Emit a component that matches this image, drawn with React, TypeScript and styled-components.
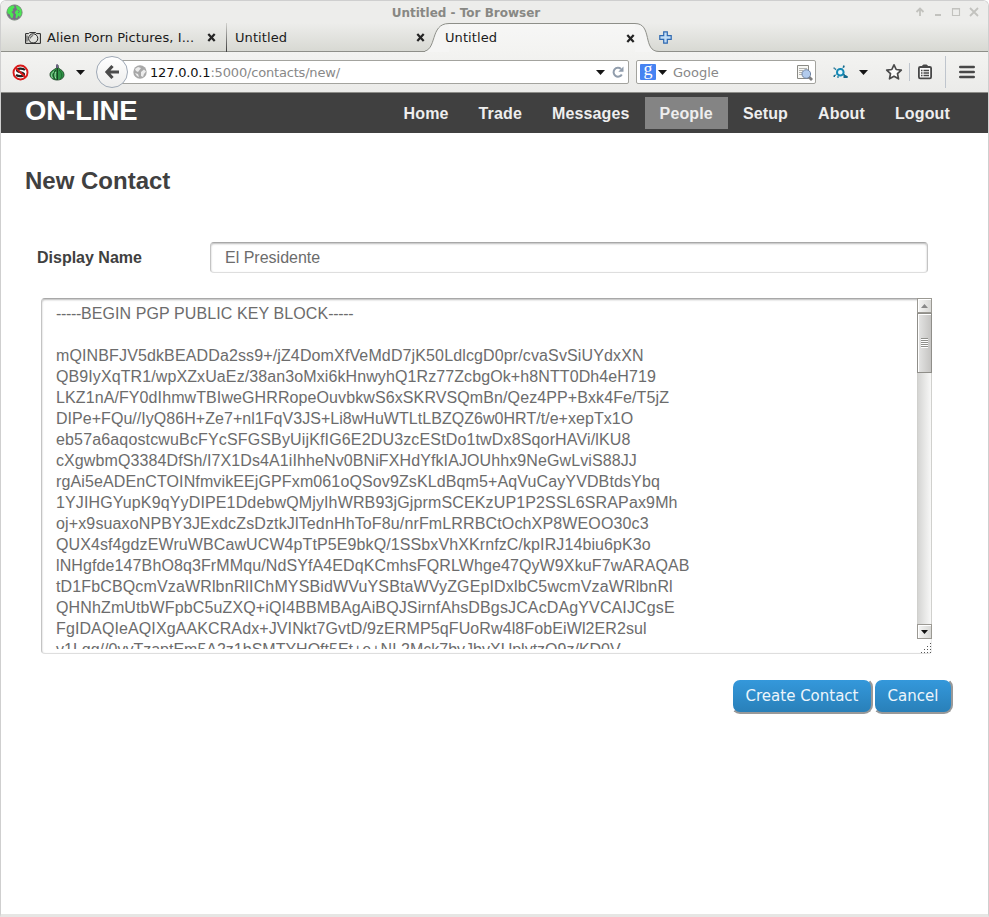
import React from 'react';
import styled, { createGlobalStyle } from 'styled-components';

const GlobalStyle = createGlobalStyle`
  * { box-sizing: border-box; }
  html, body { margin: 0; padding: 0; background: #fff; overflow: hidden; }
`;

const ui = `'DejaVu Sans', sans-serif`;
const helvetica = `'Liberation Sans', Arial, sans-serif`;

const Window = styled.div`
  width: 989px;
  height: 917px;
  display: flex;
  flex-direction: column;
  border: 1px solid #cfcfcf;
  border-bottom: 3px solid #e6e6e4;
  border-radius: 6px 6px 0 0;
  background: #fff;
  overflow: hidden;
  font-family: ${ui};
  white-space: nowrap;
`;

const Chrome = styled.header`
  flex: none;
  height: 51px;
  background: linear-gradient(#ededeb 0 22px, #d8d9d3 50px);
  border-bottom: 1px solid #8e8f89;
`;

const TitleBar = styled.div`
  display: grid;
  grid-template-columns: 26px 1fr 80px;
  height: 22px;
  padding: 0 8px 0 5px;
  align-items: center;
`;

const Title = styled.div`
  text-align: center;
  font-size: 12px;
  font-weight: bold;
  color: #888884;
  padding-top: 1px;
`;

const WindowButtons = styled.div`
  display: flex;
  justify-content: flex-end;
  gap: 6px;
`;

const TabStrip = styled.div`
  display: flex;
  height: 29px;
  align-items: stretch;
`;

const Tab = styled.div<{ $width: number; $divider?: boolean }>`
  display: flex;
  align-items: center;
  width: ${(p) => p.$width}px;
  font-size: 13px;
  letter-spacing: 0.08px;
  color: #1b1b1b;
  border-right: ${(p) => (p.$divider ? '1px solid #4d4d4a' : 'none')};
  border-image: ${(p) => (p.$divider ? 'linear-gradient(#d8d8d4, #444 90%) 1' : 'none')};
`;

const TabLabel = styled.span`
  flex: 1;
  padding-bottom: 1px;
`;

const ActiveTab = styled(Tab)`
  height: 29px;
  background: linear-gradient(#f7f7f6, #f3f3f1);
  border-top: 1px solid #8e8f89;
  margin-bottom: -1px;
`;

const ActiveLabel = styled(TabLabel)`
  margin-left: -4px;
  z-index: 1;
`;

const TabCurve = styled.svg`
  flex: none;
  width: 24px;
  height: 29px;
`;

const Toolbar = styled.div`
  flex: none;
  display: flex;
  align-items: center;
  height: 41px;
  background: linear-gradient(#f3f3f1, #ebebe9);
  border-bottom: 1px solid #8c8c88;
`;

const BackButton = styled.div`
  display: flex;
  align-items: center;
  justify-content: center;
  width: 32px;
  height: 32px;
  margin: 0 -10px 0 11px;
  border: 1px solid #9fa9b6;
  border-radius: 50%;
  background: linear-gradient(#fff, #ededec);
  z-index: 1;
`;

const Field = styled.div<{ $width: number; $inset: number }>`
  display: flex;
  align-items: center;
  width: ${(p) => p.$width}px;
  height: 24px;
  padding-left: ${(p) => p.$inset}px;
  border: 1px solid #a3a39e;
  border-radius: 2px;
  background: #fff;
`;

const Address = styled.span`
  flex: 1;
  padding-left: 3px;
  font-size: 13px;
  letter-spacing: -0.18px;
  color: #888;
`;

const Host = styled.span`
  color: #111;
`;

const SearchHint = styled(Address)`
  padding-left: 6px;
  letter-spacing: 0;
`;

const GoogleMark = styled.span`
  width: 16px;
  height: 16px;
  border-radius: 1px;
  background: #4683f2;
  color: #fff;
  font: 18px/11px 'Liberation Serif', serif;
  text-align: center;
  margin-right: 2px;
`;

const Spacer = styled.span<{ $width: number }>`
  flex: none;
  width: ${(p) => p.$width}px;
`;

const Rule = styled.span<{ $height: number }>`
  width: 1px;
  height: ${(p) => p.$height}px;
  background: #bfc5cd;
`;

const SiteBar = styled.nav`
  flex: none;
  display: flex;
  justify-content: space-between;
  height: 40px;
  padding: 4px 23px 4px 24px;
  background: #404040;
  font-family: ${helvetica};
  font-weight: bold;
`;

const Brand = styled.div`
  font-size: 27.4px;
  line-height: 28px;
  color: #fff;
`;

const NavList = styled.div`
  display: flex;
`;

const NavItem = styled.a<{ $active?: boolean }>`
  padding: 0 15px;
  height: 32px;
  font-size: 16px;
  line-height: 33px;
  letter-spacing: 0.14px;
  color: #eee;
  background: ${(p) => (p.$active ? '#848484' : 'transparent')};
`;

const Page = styled.main`
  flex: 1;
  font-family: ${helvetica};
  color: #404040;
`;

const Heading = styled.h1`
  margin: 0;
  padding: 34px 0 0 24px;
  font-size: 24px;
  line-height: 28px;
`;

const FormRow = styled.div`
  display: flex;
  align-items: center;
  height: 31px;
  margin: 47px 0 25px 36px;
`;

const Label = styled.label`
  width: 173px;
  font-size: 16px;
  font-weight: bold;
`;

const Sunken = styled.div`
  border: 1px solid #c4c4c4;
  border-top-color: #a8a8a8;
  border-bottom-color: #dedede;
  border-radius: 4px;
  box-shadow: inset 0 1px 2px #bbb;
  background: #fff;
  color: #6c6c6c;
  font-size: 16px;
`;

const NameInput = styled(Sunken)`
  width: 718px;
  height: 31px;
  padding-left: 14px;
  line-height: 30px;
`;

const KeyArea = styled(Sunken)`
  display: flex;
  width: 891px;
  height: 356px;
  margin-left: 40px;
  border-right: 0;
`;

const KeyText = styled.div`
  flex: 1;
  height: 350px;
  padding: 4px 0 0 14px;
  line-height: 21px;
  overflow: hidden;
`;

const KeyLine = styled.div<{ $spacing: number }>`
  height: 21px;
  letter-spacing: ${(p) => p.$spacing}px;
`;

const Dashes = styled.span`
  letter-spacing: -0.33px;
`;

const ScrollColumn = styled.div`
  display: flex;
  flex-direction: column;
  width: 15px;
  margin-top: -1px;
`;

const ScrollButton = styled.div`
  display: flex;
  align-items: center;
  justify-content: center;
  flex: none;
  height: 15px;
  border: 1px solid #9b9993;
  background: linear-gradient(90deg, #f5f5f4, #d8d8d5);
  box-shadow: inset 1px 1px #fff;
`;

const Track = styled.div`
  flex: 1;
  border: solid #d0d0cd;
  border-width: 0 1px;
  background: linear-gradient(90deg, #d5d5d3, #f8f8f7);
`;

const Thumb = styled.div`
  display: flex;
  align-items: center;
  justify-content: center;
  height: 60px;
  margin: 0 -1px;
  border: 1px solid #8f8e89;
  background: linear-gradient(90deg, #e5e5e4, #c5c4c2);
  box-shadow: inset 1px 1px #fff;
`;

const Grip = styled.div`
  width: 7px;
  height: 10px;
  background: repeating-linear-gradient(#8f8f8b 0 1px, #fff 1px 2px);
`;

const ResizeCorner = styled.svg`
  display: block;
  flex: none;
  width: 15px;
  height: 14px;
`;

const Actions = styled.div`
  display: flex;
  justify-content: flex-end;
  padding: 24px 35px 0 0;
`;

const Button = styled.button<{ $width: number }>`
  width: ${(p) => p.$width}px;
  height: 36px;
  padding: 0;
  border: 2px solid;
  border-color: #fff #999 #999 #fff;
  border-radius: 9px;
  background: linear-gradient(#3498db, #2980b9);
  color: #ecf5fb;
  font: 15px ${ui};
`;

const Caret = () => (
  <svg width="9" height="5" viewBox="0 0 9 5"><path d="M0 0h9L4.5 5z" fill="#151515" /></svg>
);

const Close = () => (
  <svg width="9" height="9" viewBox="0 0 9 9"><path d="M1.3 1l6.4 7M7.7 1L1.3 8" stroke="#252525" strokeWidth="2.2" /></svg>
);

const GlobeLogo = () => (
  <svg width="17" height="17" viewBox="0 0 17 17">
    <circle cx="8.5" cy="8.5" r="7.6" fill="#7b6a88" stroke="#7a8a7c" />
    <path d="M1.3 6.500L3 3.300l3.500-1.900 1.800.8.200 1.800-1.800.8.500 1.700L5.500 8l2 2.300-1 4-1.500-.5-1.500-3.600-2-1zM9.800 1.500l3.400 1.300L15.500 6v4.500L13.800 13l-1.500-1.500L11 14.500l-1.500-1 .6-3L8.800 9l.8-2.200 1.900-.8-1-1.500z" fill="#4be653" />
    <path d="M12 6l1.500 1.500L12 9" stroke="#7b6a88" fill="none" />
  </svg>
);

const Camera = () => (
  <svg width="16" height="14" viewBox="0 0 16 14" fill="none" stroke="#222">
    <path d="M.6 2.600h3l1-1h6l1 1h3.800v9.800H.6z" />
    <circle cx="8.200" cy="7.400" r="4.600" />
    <path d="M5.500 7.400a2.700 2.700 0 012.700-2.800M2 4.500v6" strokeWidth=".8" />
  </svg>
);

const NoScript = () => (
  <svg width="17" height="17" viewBox="0 0 17 17">
    <circle cx="8.500" cy="8.500" r="7" fill="#fff" />
    <path d="M13 6C11 4 5 4 5 6.300c0 2.600 7 1.200 7 4 0 2.300-5 2.500-8 .7" fill="none" stroke="#222" strokeWidth="2.200" />
    <circle cx="8.500" cy="8.500" r="7" fill="none" stroke="#d91a1a" strokeWidth="1.900" />
    <path d="M3.700 4l9.600 9" stroke="#d91a1a" strokeWidth="1.900" />
  </svg>
);

const Onion = () => (
  <svg width="16" height="17" viewBox="0 0 16 17">
    <path d="M7.500 1h1.500l.3 3c2.400 1.700 5.700 3 5.700 6.600 0 3.500-3 5.400-6.800 5.400S1 14 1 10.500C1 7 5 6 7.500 3.800z" fill="#2f9446" stroke="#24482b" strokeWidth=".9" />
    <path d="M8.300 4v12" stroke="#173e20" strokeWidth="1.200" />
    <path d="M7 6C3.800 8.500 3.800 12.500 6 15.200" fill="none" stroke="#1b4d26" />
    <path d="M5 7.500c-3 2-3 4-1.500 6.500M6.800 8c-1 2.500-1 4 0 6.500" fill="none" stroke="#9fdcaa" />
    <path d="M10 6c3.500 3 3.500 7 .8 9.500" fill="none" stroke="#1c6a30" />
    <path d="M7.800.5l.7 3.500" stroke="#76608f" strokeWidth="1.700" />
  </svg>
);

const BackArrow = () => (
  <svg width="16" height="16" viewBox="0 0 16 16"><path d="M8.500 2L3 8l5.500 6M4 8h11" fill="none" stroke="#4b4b4b" strokeWidth="3.200" /></svg>
);

const SiteGlobe = () => (
  <svg width="14" height="14" viewBox="0 0 14 14">
    <circle cx="7" cy="7" r="6.700" fill="#a8a8a8" />
    <path d="M2 4l3-2 3 1-1.500 2L5 7 3 6zM8 7l3-2.500 2 2L11 9l-1 3-2-1zM2 8l3 1 1 3-2-1z" fill="#ececec" />
  </svg>
);

const Reload = () => (
  <svg width="12" height="12" viewBox="0 0 12 12">
    <path d="M9.800 8.500A4.400 4.400 0 119 3" fill="none" stroke="#919dac" strokeWidth="2" />
    <path d="M11.500.5v5.300H6.300z" fill="#919dac" />
  </svg>
);

const SearchPage = () => (
  <svg width="17" height="17" viewBox="0 0 17 17">
    <path d="M1.500 1.500h11v13h-11z" fill="#f7f7f4" stroke="#8a8a85" />
    <path d="M3 4.500h8M3 6.500h4M3 8.500h3M3 10.500h3" stroke="#b4b4b0" />
    <path d="M13 13l3 3" stroke="#7d7d7d" strokeWidth="2.800" />
    <circle cx="10.300" cy="10" r="4.300" fill="#b2cbed" stroke="#7084a3" />
  </svg>
);

const Network = () => (
  <svg width="16" height="14" viewBox="0 0 16 14">
    <path d="M1.500 3.500l3 2M11 1L9 4M1 11l3-2M10 9l3 2M5 13v-2" stroke="#247a9c" strokeWidth="1.300" strokeDasharray="2 1" />
    <circle cx="7.300" cy="7.300" r="3.300" fill="#e6f8ff" stroke="#1389b5" strokeWidth="2" />
    <path d="M10 .5h1.500v2H10zM10.500 9l4.500 2.500-.5 1.500h-4zM.5 2.500h1.300v1.300H.5zM.5 10.500h1.500V12H.5z" fill="#14688b" />
  </svg>
);

const Star = () => (
  <svg width="18" height="18" viewBox="0 0 18 18"><path d="M9 1.800l2.200 4.700 5.100.6-3.800 3.500 1 5.200L9 13.300l-4.500 2.500 1-5.200L1.700 7.100l5.100-.6z" fill="#fbfbfb" stroke="#4b4b4b" strokeWidth="1.700" strokeLinejoin="round" /></svg>
);

const Clipboard = () => (
  <svg width="14" height="16" viewBox="0 0 14 16">
    <rect x=".9" y="3" width="12.200" height="11.300" rx="1.300" fill="#fafafa" stroke="#484848" strokeWidth="1.800" />
    <path d="M4 3.500V1.800L5.500.5h3L10 1.800v1.700z" fill="#484848" />
    <path d="M3 6.500h1.500M3 9h1.500M3 11.500h1.500M5.500 6.500H11M5.500 9H11M5.500 11.500H11" stroke="#484848" strokeWidth="1.300" />
  </svg>
);

const Menu = () => (
  <svg width="16" height="14" viewBox="0 0 16 14"><path d="M1.300 2h13.400M1.300 7h13.400M1.300 12h13.400" stroke="#484848" strokeWidth="2.600" strokeLinecap="round" /></svg>
);

const Plus = () => (
  <svg width="13" height="13" viewBox="0 0 13 13"><path d="M4.700.8h3.600v3.900h3.900v3.600H8.300v3.900H4.700V8.300H.8V4.700h3.900z" fill="#c1dcf5" stroke="#2e68b0" strokeWidth="1.200" /></svg>
);

const WindowIcon = ({ d, width = 1.6 }: { d: string; width?: number }) => (
  <svg width="12" height="12" viewBox="0 0 12 12"><path d={d} fill="none" stroke="#c2c2be" strokeWidth={width} /></svg>
);

const SizeGrip = () => (
  <ResizeCorner viewBox="0 0 15 14">
    <path d="M13 4.500h1M10 7.500h1M13 7.500h1M7 10.500h1M10 10.500h1M13 10.500h1M4 13.500h1M7 13.500h1M10 13.500h1M13 13.500h1" stroke="#555" />
  </ResizeCorner>
);

const navItems = ['Home', 'Trade', 'Messages', 'People', 'Setup', 'About', 'Logout'];

const keyLines: [string, number][] = [
  ['mQINBFJV5dkBEADDa2ss9+/jZ4DomXfVeMdD7jK50LdlcgD0pr/cvaSvSiUYdxXN', 0.13],
  ['QB9IyXqTR1/wpXZxUaEz/38an3oMxi6kHnwyhQ1Rz77ZcbgOk+h8NTT0Dh4eH719', 0.1],
  ['LKZ1nA/FY0dIhmwTBIweGHRRopeOuvbkwS6xSKRVSQmBn/Qez4PP+Bxk4Fe/T5jZ', 0.1],
  ['DIPe+FQu//IyQ86H+Ze7+nl1FqV3JS+Li8wHuWTLtLBZQZ6w0HRT/t/e+xepTx1O', 0.04],
  ['eb57a6aqostcwuBcFYcSFGSByUijKfIG6E2DU3zcEStDo1twDx8SqorHAVi/lKU8', 0.15],
  ['cXgwbmQ3384DfSh/I7X1Ds4A1iIhheNv0BNiFXHdYfkIAJOUhhx9NeGwLviS88JJ', 0.1],
  ['rgAi5eADEnCTOINfmvikEEjGPFxm061oQSov9ZsKLdBqm5+AqVuCayYVDBtdsYbq', 0.12],
  ['1YJIHGYupK9qYyDIPE1DdebwQMjyIhWRB93jGjprmSCEKzUP1P2SSL6SRAPax9Mh', 0.14],
  ['oj+x9suaxoNPBY3JExdcZsDztkJlTednHhToF8u/nrFmLRRBCtOchXP8WEOO30c3', 0.14],
  ['QUX4sf4gdzEWruWBCawUCW4pTtP5E9bkQ/1SSbxVhXKrnfzC/kpIRJ14biu6pK3o', 0.1],
  ['lNHgfde147BhO8q3FrMMqu/NdSYfA4EDqKCmhsFQRLWhge47QyW9XkuF7wARAQAB', 0.11],
  ['tD1FbCBQcmVzaWRlbnRlIChMYSBidWVuYSBtaWVyZGEpIDxlbC5wcmVzaWRlbnRl', 0.14],
  ['QHNhZmUtbWFpbC5uZXQ+iQI4BBMBAgAiBQJSirnfAhsDBgsJCAcDAgYVCAIJCgsE', 0.13],
  ['FgIDAQIeAQIXgAAKCRAdx+JVINkt7GvtD/9zERMP5qFUoRw4l8FobEiWl2ER2sul', 0.11],
  ['v1Lqg//0vyTzaptEm5A2z1bSMTYHQft5Et+e+NL2Mck7bvJbvXUplytzQ9z/KD0V', 0],
];

export default function App() {
  return (
    <>
      <GlobalStyle />
      <Window>
        <Chrome>
          <TitleBar>
            <GlobeLogo />
            <Title>Untitled - Tor Browser</Title>
            <WindowButtons>
              <WindowIcon d="M6 10V3M2.500 6L6 2.500 9.500 6" width={1.8} />
              <WindowIcon d="M3 9h6" width={2} />
              <WindowIcon d="M2.500 2.500h7v7h-7zM2 3h8" width={1.1} />
              <WindowIcon d="M2 2l8 8M10 2l-8 8" width={1.8} />
            </WindowButtons>
          </TitleBar>
          <TabStrip>
            <Tab $width={226} $divider>
              <Spacer $width={24} />
              <Camera />
              <Spacer $width={6} />
              <TabLabel>Alien Porn Pictures, I...</TabLabel>
              <Close />
              <Spacer $width={10} />
            </Tab>
            <Tab $width={198}>
              <Spacer $width={8} />
              <TabLabel>Untitled</TabLabel>
              <Close />
            </Tab>
            <TabCurve viewBox="0 0 24 29">
              <path d="M-3 28.500C13 28.500 4 .5 24 .5V29H0z" fill="#f5f5f4" />
              <path d="M-3 28.500C13 28.500 4 .5 24 .5" fill="none" stroke="#8e8f89" />
            </TabCurve>
            <ActiveTab $width={186}>
              <ActiveLabel>Untitled</ActiveLabel>
              <Close />
            </ActiveTab>
            <TabCurve viewBox="0 0 24 29">
              <path d="M0 .5C18 .5 7 28.500 24 28.500V29H0z" fill="#f5f5f4" />
              <path d="M0 .5C18 .5 7 28.500 24 28.500" fill="none" stroke="#8e8f89" />
            </TabCurve>
            <Tab as="div" $width={20}><Plus /></Tab>
          </TabStrip>
        </Chrome>

        <Toolbar>
          <Spacer $width={11} />
          <NoScript />
          <Spacer $width={20} />
          <Onion />
          <Spacer $width={11} />
          <Caret />
          <BackButton><BackArrow /></BackButton>
          <Field $width={511} $inset={14}>
            <SiteGlobe />
            <Address><Host>127.0.0.1</Host>:5000/contacts/new/</Address>
            <Caret />
            <Spacer $width={7} />
            <Reload />
            <Spacer $width={4} />
          </Field>
          <Spacer $width={7} />
          <Field $width={180} $inset={3}>
            <GoogleMark>g</GoogleMark>
            <Caret />
            <SearchHint>Google</SearchHint>
            <SearchPage />
            <Spacer $width={2} />
          </Field>
          <Spacer $width={17} />
          <Network />
          <Spacer $width={10} />
          <Caret />
          <Spacer $width={17} />
          <Star />
          <Spacer $width={6} />
          <Rule $height={18} />
          <Spacer $width={8} />
          <Clipboard />
          <Spacer $width={13} />
          <Rule $height={32} />
          <Spacer $width={13} />
          <Menu />
        </Toolbar>

        <SiteBar>
          <Brand>ON-LINE</Brand>
          <NavList>
            {navItems.map((name) => (
              <NavItem key={name} $active={name === 'People'}>{name}</NavItem>
            ))}
          </NavList>
        </SiteBar>

        <Page>
          <Heading>New Contact</Heading>
          <FormRow>
            <Label>Display Name</Label>
            <NameInput>El Presidente</NameInput>
          </FormRow>
          <KeyArea>
            <KeyText>
              <KeyLine $spacing={0.09}>
                <Dashes>-----</Dashes>BEGIN PGP PUBLIC KEY BLOCK<Dashes>-----</Dashes>
              </KeyLine>
              <KeyLine $spacing={0} />
              {keyLines.map(([line, spacing]) => (
                <KeyLine key={line} $spacing={spacing}>{line}</KeyLine>
              ))}
            </KeyText>
            <ScrollColumn>
              <ScrollButton>
                <svg width="7" height="4" viewBox="0 0 7 4"><path d="M0 4h7L3.500 0z" fill="#888" /></svg>
              </ScrollButton>
              <Track><Thumb><Grip /></Thumb></Track>
              <ScrollButton>
                <svg width="7" height="4" viewBox="0 0 7 4"><path d="M0 0h7L3.500 4z" fill="#111" /></svg>
              </ScrollButton>
              <SizeGrip />
            </ScrollColumn>
          </KeyArea>
          <Actions>
            <Button $width={142}>Create Contact</Button>
            <Button $width={80}>Cancel</Button>
          </Actions>
        </Page>
      </Window>
    </>
  );
}
